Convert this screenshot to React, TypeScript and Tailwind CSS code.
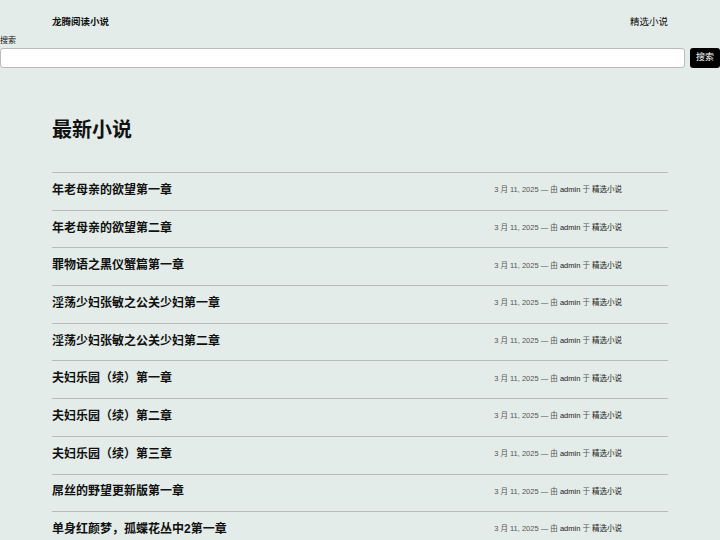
const font = { fontFamily: '"Liberation Sans", "Noto Sans CJK SC", sans-serif' };

const posts = [
  "年老母亲的欲望第一章",
  "年老母亲的欲望第二章",
  "罪物语之黑仪蟹篇第一章",
  "淫荡少妇张敏之公关少妇第一章",
  "淫荡少妇张敏之公关少妇第二章",
  "夫妇乐园（续）第一章",
  "夫妇乐园（续）第二章",
  "夫妇乐园（续）第三章",
  "屌丝的野望更新版第一章",
  "单身红颜梦，孤蝶花丛中2第一章",
];

export default function App() {
  return (
    <div className="min-h-[540px] bg-[#e3ece8] text-[#111]" style={font}>
      <header className="flex items-center justify-between px-[52px] pt-[10px] h-[34px] text-[9.5px]">
        <span className="font-semibold">龙腾阅读小说</span>
        <span>精选小说</span>
      </header>
      <div className="text-[8px] leading-[10px] mt-[2px]">搜索</div>
      <div className="flex gap-[5px] mt-[2px]">
        <input className="flex-1 h-[20px] bg-white border border-[#bbb] rounded-[3px]" />
        <button className="w-[30px] h-[20px] bg-black text-white text-[9px] rounded-[3px]">搜索</button>
      </div>
      <main className="px-[52px]">
        <h1 className="text-[20px] font-bold mt-[50px] mb-[30px] leading-[24px]">最新小说</h1>
        <ul>
          {posts.map((t) => (
            <li key={t} className="flex items-center justify-between h-[37.7px] border-t border-[#b5bcb9] pr-[46px] pb-[3px]">
              <span className="text-[12px] font-semibold">{t}</span>
              <span className="text-[7.5px] text-[#555]">
                3 月 11, 2025 — 由 <span className="text-[#222]">admin</span> 于 <span className="text-[#222]">精选小说</span>
              </span>
            </li>
          ))}
        </ul>
      </main>
    </div>
  );
}
